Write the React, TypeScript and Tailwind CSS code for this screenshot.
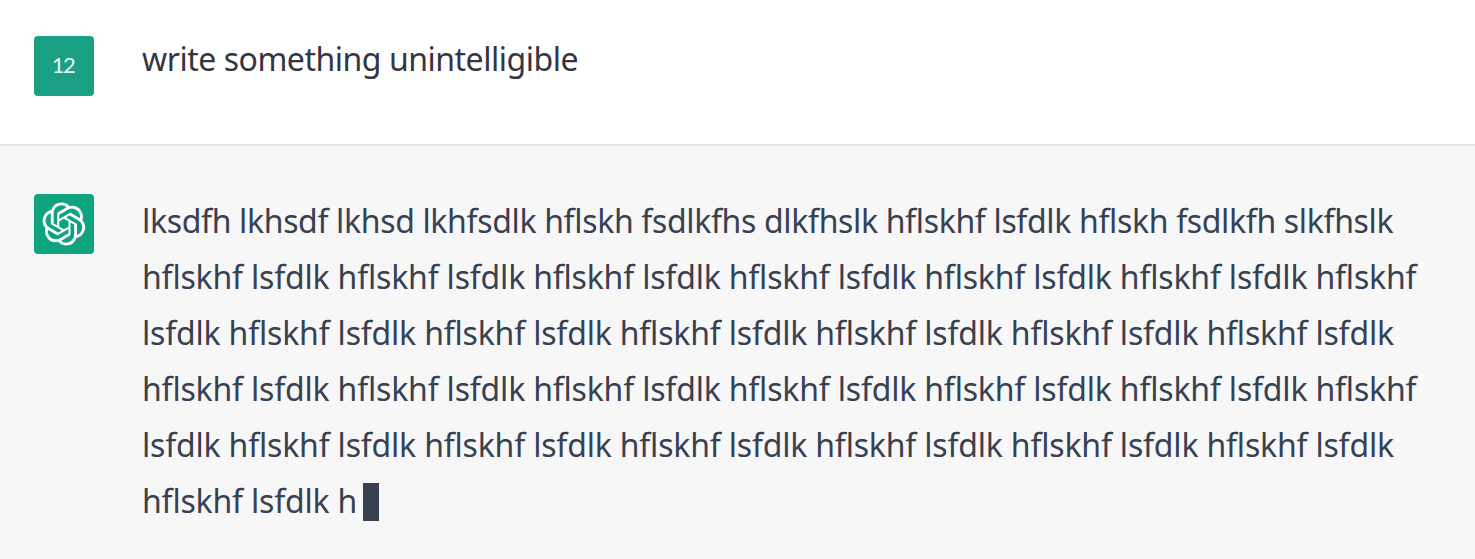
const REPLY_LINES = [
  "hflskhf lsfdlk hflskhf lsfdlk hflskhf lsfdlk hflskhf lsfdlk hflskhf lsfdlk hflskhf lsfdlk hflskhf",
  "lsfdlk hflskhf lsfdlk hflskhf lsfdlk hflskhf lsfdlk hflskhf lsfdlk hflskhf lsfdlk hflskhf lsfdlk",
  "hflskhf lsfdlk hflskhf lsfdlk hflskhf lsfdlk hflskhf lsfdlk hflskhf lsfdlk hflskhf lsfdlk hflskhf",
  "lsfdlk hflskhf lsfdlk hflskhf lsfdlk hflskhf lsfdlk hflskhf lsfdlk hflskhf lsfdlk hflskhf lsfdlk",
];

function Logo() {
  return (
    <svg viewBox="0 0 41 41" className="size-11" fill="#fff" aria-hidden="true">
      <path d="M37.532 16.87a9.963 9.963 0 0 0-.856-8.184 10.078 10.078 0 0 0-10.855-4.835A9.964 9.964 0 0 0 18.306.5a10.079 10.079 0 0 0-9.614 6.977 9.967 9.967 0 0 0-6.664 4.834 10.08 10.08 0 0 0 1.24 11.817 9.965 9.965 0 0 0 .856 8.185 10.079 10.079 0 0 0 10.855 4.835 9.965 9.965 0 0 0 7.516 3.35 10.078 10.078 0 0 0 9.617-6.981 9.967 9.967 0 0 0 6.663-4.834 10.079 10.079 0 0 0-1.243-11.813ZM22.498 37.886a7.474 7.474 0 0 1-4.799-1.735c.061-.033.168-.091.237-.134l7.964-4.6a1.294 1.294 0 0 0 .655-1.134V19.054l3.366 1.944a.12.12 0 0 1 .066.092v9.299a7.505 7.505 0 0 1-7.49 7.496ZM6.392 31.006a7.471 7.471 0 0 1-.894-5.023c.06.036.162.099.237.141l7.964 4.6a1.297 1.297 0 0 0 1.308 0l9.724-5.614v3.888a.12.12 0 0 1-.048.103l-8.051 4.649a7.504 7.504 0 0 1-10.24-2.744ZM4.297 13.62A7.469 7.469 0 0 1 8.2 10.333c0 .068-.004.19-.004.274v9.201a1.294 1.294 0 0 0 .654 1.132l9.723 5.614-3.366 1.944a.12.12 0 0 1-.114.01L7.04 23.856a7.504 7.504 0 0 1-2.743-10.237Zm27.658 6.437-9.724-5.615 3.367-1.943a.121.121 0 0 1 .113-.01l8.052 4.648a7.498 7.498 0 0 1-1.158 13.528v-9.476a1.293 1.293 0 0 0-.65-1.132Zm3.35-5.043c-.059-.037-.162-.099-.236-.141l-7.965-4.6a1.298 1.298 0 0 0-1.308 0l-9.723 5.614v-3.888a.12.12 0 0 1 .048-.103l8.05-4.645a7.497 7.497 0 0 1 11.135 7.763Zm-21.063 6.929-3.367-1.944a.12.12 0 0 1-.065-.092v-9.299a7.497 7.497 0 0 1 12.293-5.756 6.94 6.94 0 0 0-.236.134l-7.965 4.6a1.294 1.294 0 0 0-.654 1.132l-.006 11.225Zm1.829-3.943 4.33-2.501 4.332 2.5v5l-4.331 2.5-4.331-2.5V18Z" />
    </svg>
  );
}

export default function App() {
  return (
    <main className="flex h-[559px] w-[1475px] flex-col overflow-hidden bg-white font-['Noto_Sans',sans-serif] text-[32px]">
      <section className="flex h-36 shrink-0 gap-12 pl-[34px] pt-9">
        <div className="flex size-[60px] shrink-0 items-center justify-center rounded-sm bg-[#19a085] pb-0.5 pr-0.5 font-['Lato',sans-serif] text-[22px] leading-none tracking-[-1.5px] text-[#e4f8f3]">
          12
        </div>
        <p className="-mt-px h-12 whitespace-nowrap leading-[48px] tracking-[-0.48px] text-[#343541]">
          write something unintelligible
        </p>
      </section>
      <section className="flex grow gap-12 border-t-2 border-[#e4e4e4] bg-[#f7f7f7] pl-[34px] pt-12">
        <div className="flex size-[60px] shrink-0 items-center justify-center rounded-sm bg-[#10a37f]">
          <Logo />
        </div>
        <div className="-mt-px whitespace-nowrap leading-[56px] tracking-[-0.195px] text-[#374151]">
          <p className="h-14 tracking-[-0.345px]">
            lksdfh lkhsdf lkhsd lkhfsdlk hflskh fsdlkfhs dlkfhslk hflskhf lsfdlk hflskh fsdlkfh slkfhslk
          </p>
          {REPLY_LINES.map((line, i) => (
            <p key={i} className="h-14">
              {line}
            </p>
          ))}
          <p className="flex h-14 items-center gap-1.5">
            hflskhf lsfdlk h
            <span className="mt-0.5 h-[38px] w-4 bg-[#374151]" />
          </p>
        </div>
      </section>
    </main>
  );
}
